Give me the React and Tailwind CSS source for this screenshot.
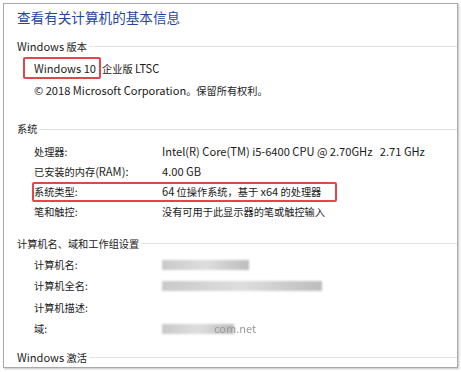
import React from "react";

const FONT = { fontFamily: '"Noto Sans CJK SC", "Noto Sans", sans-serif' };

// Latin runs are set a touch larger than the CJK text, as the UI font does
function L({ children }) {
  return <span className="text-[11.1px]">{children}</span>;
}

function Section({ title, children }) {
  return (
    <div>
      <div className="flex items-center h-[20px]">
        <span className="text-[#1a1a1a]">{title}</span>
        <div className="flex-1 h-px bg-[#e3e3e3] ml-[2px]" />
      </div>
      {children}
    </div>
  );
}

function Row({ label, children, boxed, h = "h-[20.3px]" }) {
  return (
    <div className={`relative flex items-center pl-[17px] ${h}`}>
      {boxed && (
        <div className="absolute left-[15px] top-[0px] w-[305px] h-[20px] border-2 border-[#e0464c] rounded-[2px]" />
      )}
      <span className="w-[128px] shrink-0">{label}</span>
      <span>{children}</span>
    </div>
  );
}

function Blur({ w, tail }) {
  return (
    <span className="flex items-center">
      <span
        className="h-[10px] bg-gradient-to-r from-[#c9c9c9] via-[#dedede] to-[#bdbdbd] blur-[1px]"
        style={{ width: w }}
      />
      {tail && <span className="text-[11px] text-[#9a9a9a] blur-[0.6px] -ml-[20px]">{tail}</span>}
    </span>
  );
}

export default function App() {
  return (
    <div className="w-[461px] h-[372px] bg-white p-[3px] pb-[4px] text-[10.2px] text-[#1a1a1a]" style={FONT}>
      <div className="h-full border border-[#a9a9a9] shadow-[1px_1px_2px_rgba(0,0,0,0.25)] pl-[13px] overflow-hidden">
        <div className="pt-[3px] h-[32px] text-[13.6px] text-[#1f47a0]">查看有关计算机的基本信息</div>

        <Section title={<><L>Windows</L> 版本</>}>
          <div className="pl-[17px] pt-[1px]">
            <div className="h-[22px] flex items-center">
              <span className="-ml-[11px] h-[22px] flex items-center pl-[9px] pr-[3px] border-2 border-[#e0464c] rounded-[2px]">
                <L>Windows 10</L>
              </span>
              <span className="ml-[1px]">企业版 <L>LTSC</L></span>
            </div>
            <div className="h-[22px] flex items-center">
              <span><L>© 2018 Microsoft Corporation</L>。保留所有权利。</span>
            </div>
          </div>
          <div className="h-[18px]" />
        </Section>

        <Section title="系统">
          <div className="pt-[2px]">
            <Row label="处理器:"><L>Intel(R) Core(TM) i5-6400 CPU @ 2.70GHz&nbsp;&nbsp;&nbsp;2.71 GHz</L></Row>
            <Row label={<>已安装的内存<L>(RAM):</L></>}><L>4.00 GB</L></Row>
            <Row label="系统类型:" boxed><L>64</L> 位操作系统，基于 <L>x64</L> 的处理器</Row>
            <Row label="笔和触控:">没有可用于此显示器的笔或触控输入</Row>
          </div>
          <div className="h-[11px]" />
        </Section>

        <Section title="计算机名、域和工作组设置">
          <div className="pt-[1px]">
            <Row h="h-[21.3px]" label="计算机名:"><Blur w={87} /></Row>
            <Row h="h-[21.3px]" label="计算机全名:"><Blur w={160} /></Row>
            <Row h="h-[21.3px]" label="计算机描述:"></Row>
            <Row h="h-[21.3px]" label="域:"><Blur w={72} tail="com.net" /></Row>
          </div>
          <div className="h-[8px]" />
        </Section>

        <Section title={<><L>Windows</L> 激活</>} />
      </div>
    </div>
  );
}
